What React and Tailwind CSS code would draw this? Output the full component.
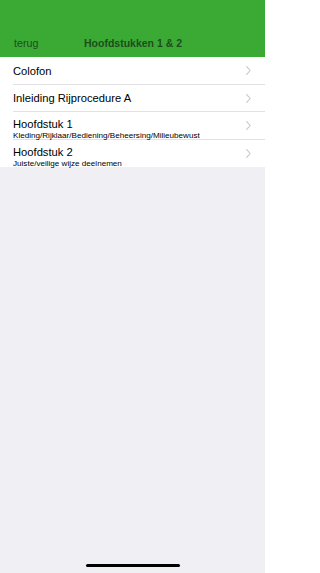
import React from "react";

const rows = [
  { title: "Colofon", h: "h-[28px]" },
  { title: "Inleiding Rijprocedure A", h: "h-[27px]" },
  {
    title: "Hoofdstuk 1",
    sub: "Kleding/Rijklaar/Bediening/Beheersing/Milieubewust",
    h: "h-[28px]",
  },
  { title: "Hoofdstuk 2", sub: "Juiste/veilige wijze deelnemen", h: "h-[27px]" },
];

const Chevron = () => (
  <svg width="5" height="9" viewBox="0 0 5 9" fill="none" className="shrink-0">
    <path d="M0.7 0.7 L4.2 4.5 L0.7 8.3" stroke="#c5c5c9" strokeWidth="1.1" strokeLinecap="round" strokeLinejoin="round" />
  </svg>
);

const App = () => {
  return (
    <div
      className="flex h-[573px] w-[265px] flex-col overflow-hidden bg-[#f0eff4]"
      style={{ fontFamily: '"Liberation Sans", Arial, sans-serif' }}
    >
      <div className="flex h-[57px] shrink-0 items-end bg-[#3aaa35]">
        <div className="flex h-[27px] w-full items-center pl-[14px]">
          <span className="w-[70px] text-[10.7px] text-[#1e4d1c]">terug</span>
          <span className="text-[10.5px] font-bold text-[#1e4d1c]">Hoofdstukken 1 &amp; 2</span>
        </div>
      </div>

      <div className="bg-white">
        {rows.map((r, i) => (
          <div key={r.title} className={`flex ${r.h} pl-[13px]`}>
            <div
              className={`flex flex-1 items-center pr-[14px] ${
                i < rows.length - 1 ? "border-b border-[#e2e2e5]" : ""
              }`}
            >
              {r.sub ? (
                <div className="flex flex-1 flex-col self-start pt-[5.5px]">
                  <span className="text-[11.2px] leading-[12px] text-black">{r.title}</span>
                  <span className="text-[8.1px] leading-[11px] text-black">{r.sub}</span>
                </div>
              ) : (
                <span className="flex-1 text-[11.2px] leading-[12px] text-black">{r.title}</span>
              )}
              <Chevron />
            </div>
          </div>
        ))}
      </div>

      <div className="mt-auto flex justify-center pb-[6px]">
        <div className="h-[3px] w-[94px] rounded-full bg-black" />
      </div>
    </div>
  );
};

export default App;
